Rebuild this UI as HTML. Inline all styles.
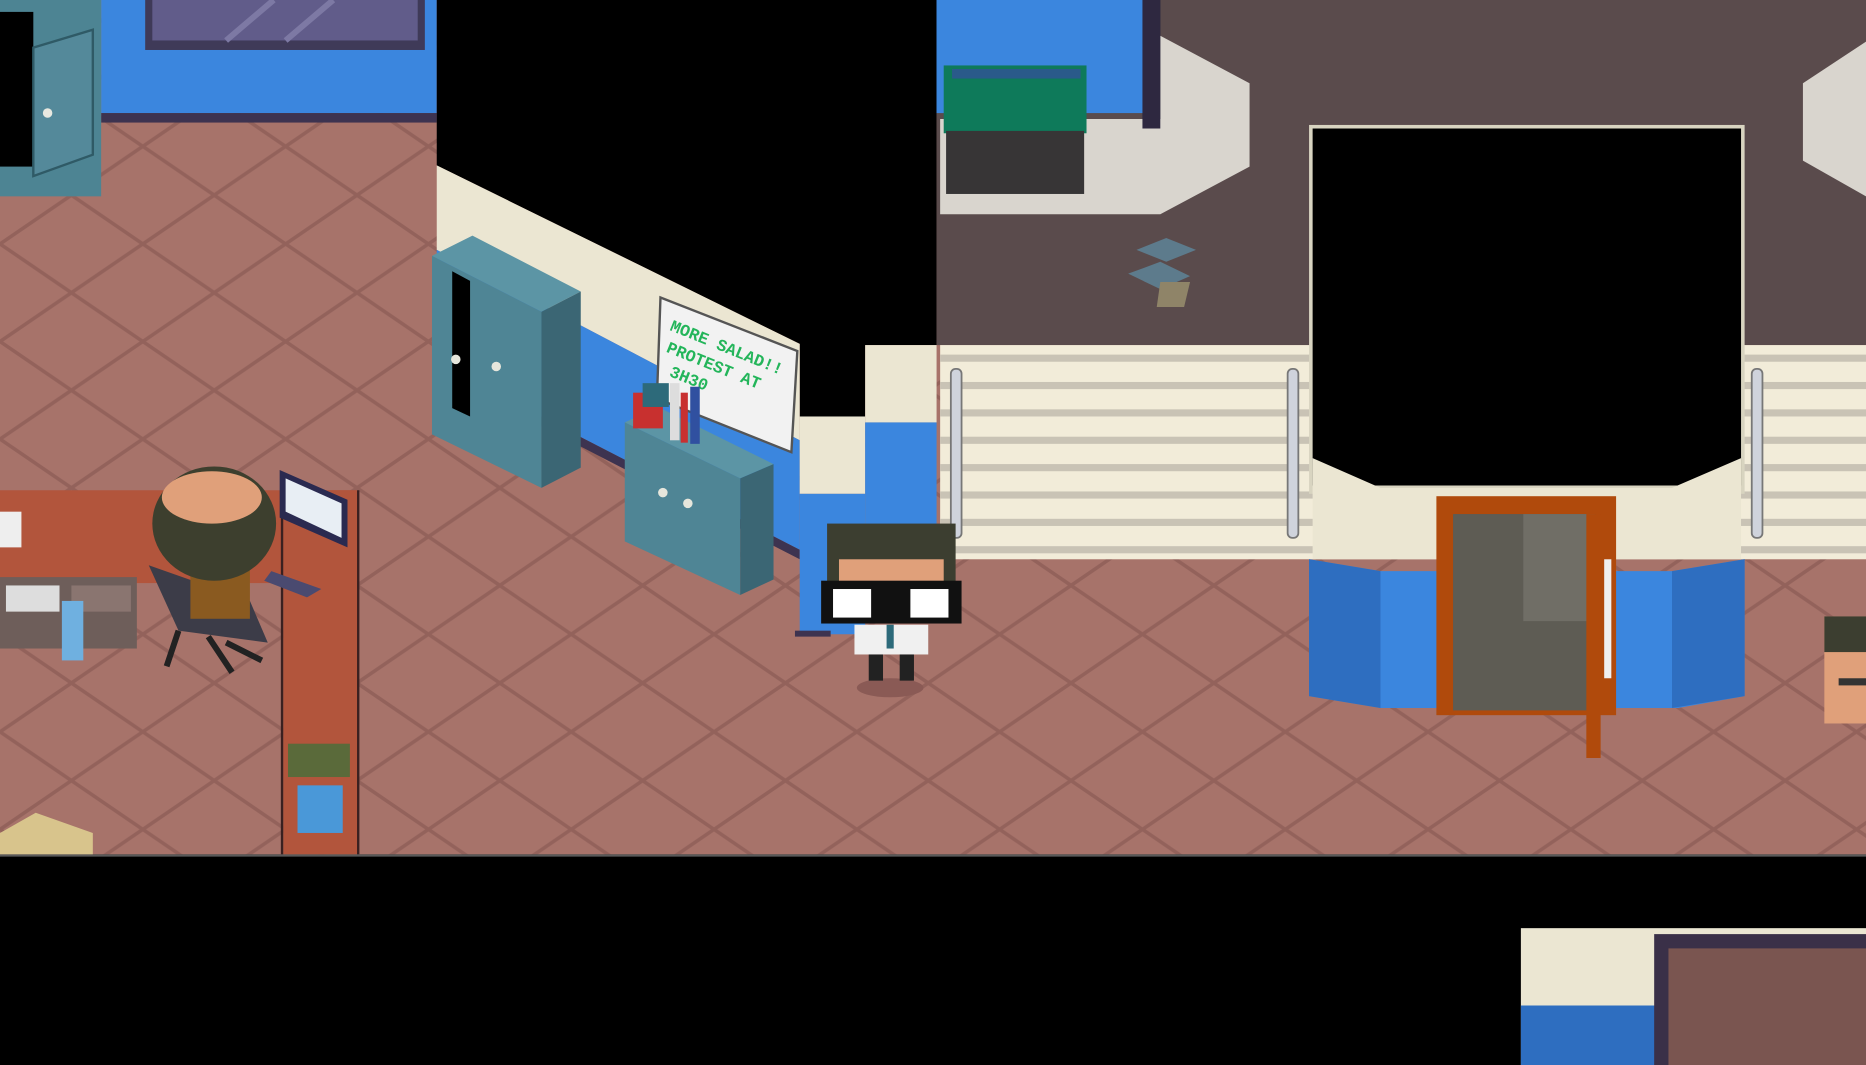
<!DOCTYPE html>
<html><head><style>html,body{margin:0;padding:0;background:#000;overflow:hidden}svg{display:block}</style></head><body>
<svg width="1866" height="1065" viewBox="0 0 1568 895" preserveAspectRatio="none" xmlns="http://www.w3.org/2000/svg">
<defs>
<pattern id="fl" width="120" height="82" patternUnits="userSpaceOnUse" x="0" y="0">
<rect width="120" height="82" fill="#a7736a"/>
<path d="M0 41 L60 0 L120 41 L60 82 Z" fill="none" stroke="#93625b" stroke-width="3"/>
</pattern>
</defs>
<rect width="1568" height="895" fill="#000"/>
<!-- floor -->
<rect x="0" y="0" width="1568" height="718" fill="url(#fl)"/>
<!-- top-left wall -->
<rect x="85" y="0" width="282" height="95" fill="#3b86de"/>
<rect x="85" y="95" width="282" height="8" fill="#3d3350"/>
<rect x="122" y="0" width="235" height="42" fill="#3f3a58"/>
<rect x="128" y="0" width="223" height="34" fill="#615c8a"/>
<path d="M190 34 L230 0 M240 34 L280 0" stroke="#7d79a4" stroke-width="5"/>
<!-- top-left cabinet -->
<rect x="0" y="0" width="85" height="165" fill="#4d8493"/>
<rect x="0" y="10" width="28" height="130" fill="#000"/>
<path d="M28 40 L78 25 L78 130 L28 148 Z" fill="#54899a" stroke="#2f5a66" stroke-width="2"/>
<circle cx="40" cy="95" r="4" fill="#e8e8e0"/>
<!-- black area top middle -->
<polygon points="367,0 787,0 787,290 727,290 727,350 672,350 672,289 367,139" fill="#000"/>
<!-- wall beige + blue -->
<polygon points="367,139 672,289 672,370 367,210" fill="#ebe6d2"/>
<polygon points="367,210 672,370 672,462 367,305" fill="#3b86de"/>
<polygon points="367,305 672,462 672,470 367,313" fill="#3d3350"/>
<!-- pillar -->
<rect x="672" y="350" width="55" height="65" fill="#ebe6d2"/>
<rect x="672" y="415" width="55" height="118" fill="#3b86de"/>
<rect x="727" y="290" width="60" height="65" fill="#ebe6d2"/>
<rect x="727" y="355" width="60" height="95" fill="#3b86de"/>
<rect x="668" y="530" width="30" height="5" fill="#3d3350"/>
<!-- wardrobe -->
<polygon points="363,215 397,198 488,245 455,262" fill="#5c95a5"/>
<polygon points="363,215 455,262 455,410 363,365" fill="#4f8595"/>
<polygon points="455,262 488,245 488,393 455,410" fill="#3b6674"/>
<polygon points="380,228 395,236 395,350 380,343" fill="#000"/>
<circle cx="383" cy="302" r="4" fill="#e6e6dc"/><circle cx="417" cy="308" r="4" fill="#e6e6dc"/>
<!-- poster -->
<polygon points="555,250 670,295 665,380 552,335" fill="#f2f2f2" stroke="#555" stroke-width="2"/>
<g transform="translate(566,268) rotate(22)" fill="#23b55a" font-family="Liberation Mono, monospace" font-weight="bold" font-size="14">
<text x="0" y="10">MORE SALAD!!</text><text x="4" y="28">PROTEST AT</text><text x="14" y="46">3H30</text></g>
<!-- small cabinet -->
<polygon points="525,355 553,342 650,390 622,402" fill="#5c95a5"/>
<polygon points="525,355 622,402 622,500 525,455" fill="#4f8595"/>
<polygon points="622,402 650,390 650,487 622,500" fill="#3b6674"/>
<circle cx="557" cy="414" r="4" fill="#e6e6dc"/><circle cx="578" cy="423" r="4" fill="#e6e6dc"/>
<rect x="532" y="330" width="25" height="30" fill="#c8302f"/><rect x="540" y="322" width="22" height="20" fill="#2d6a7a"/>
<rect x="563" y="322" width="8" height="48" fill="#ddd"/><rect x="572" y="330" width="6" height="42" fill="#c83030"/><rect x="580" y="325" width="8" height="48" fill="#3050a0"/>
<!-- desk -->
<rect x="0" y="412" width="300" height="78" fill="#b2553c"/>
<rect x="238" y="412" width="62" height="306" fill="#b2553c"/>
<rect x="236" y="412" width="2" height="306" fill="#3a2020"/><rect x="300" y="412" width="2" height="306" fill="#3a2020"/>
<rect x="0" y="485" width="115" height="60" fill="#6e5e5a"/>
<rect x="5" y="492" width="45" height="22" fill="#ddd"/><rect x="60" y="492" width="50" height="22" fill="#8a7570"/>
<rect x="52" y="505" width="18" height="50" fill="#6fb0e0"/>
<!-- monitor -->
<polygon points="235,395 292,420 292,460 235,435" fill="#2a2a50"/>
<polygon points="240,402 287,423 287,452 240,430" fill="#e8eef4"/>
<polygon points="228,480 270,495 258,502 222,488" fill="#4a4a70"/>
<!-- chair + man -->
<polygon points="125,475 210,505 225,540 150,530" fill="#3c3c48"/>
<path d="M150 530 L140 560 M175 535 L195 565 M190 540 L220 555" stroke="#222" stroke-width="5"/>
<rect x="160" y="470" width="50" height="50" fill="#8a5a20"/>
<ellipse cx="180" cy="440" rx="52" ry="48" fill="#3d3f2e"/>
<ellipse cx="178" cy="418" rx="42" ry="22" fill="#e0a07a"/>
<rect x="0" y="430" width="18" height="30" fill="#eee"/>
<!-- box on desk -->
<rect x="242" y="625" width="52" height="28" fill="#5a6a3a"/>
<rect x="250" y="660" width="38" height="40" fill="#4a98d8"/>
<polygon points="0,700 30,683 78,700 78,718 0,718" fill="#d8c48c"/>
<!-- right dark floor -->
<rect x="787" y="0" width="781" height="290" fill="#5a4b4c"/>
<rect x="787" y="0" width="175" height="95" fill="#3b86de"/>
<rect x="960" y="0" width="15" height="108" fill="#2e2840"/>
<polygon points="790,100 975,100 975,30 1050,70 1050,140 975,180 790,180" fill="#d9d5ce"/>
<rect x="787" y="0" width="175" height="95" fill="#3b86de"/>
<rect x="960" y="0" width="15" height="108" fill="#2e2840"/>
<rect x="793" y="55" width="120" height="57" fill="#0e7a5a"/>
<rect x="800" y="58" width="108" height="8" fill="#2a5a8a"/>
<rect x="795" y="110" width="116" height="53" fill="#373536"/>
<polygon points="1515,70 1568,35 1568,165 1515,135" fill="#d9d5ce"/>
<polygon points="955,210 980,200 1005,210 980,220" fill="#5d7b8c"/>
<polygon points="948,230 975,220 1000,232 975,243" fill="#5d7b8c"/>
<polygon points="975,237 1000,237 995,258 972,258" fill="#8f8468"/>
<!-- stairs -->
<rect x="790" y="290" width="778" height="180" fill="#f2ecd9"/>
<g fill="#c9c3b5">
<rect x="790" y="298" width="778" height="6"/><rect x="790" y="321" width="778" height="6"/><rect x="790" y="344" width="778" height="6"/><rect x="790" y="367" width="778" height="6"/><rect x="790" y="390" width="778" height="6"/><rect x="790" y="413" width="778" height="6"/><rect x="790" y="436" width="778" height="6"/><rect x="790" y="459" width="778" height="6"/>
</g>
<g fill="#cfd3dc" stroke="#777" stroke-width="1.5">
<rect x="799" y="310" width="9" height="142" rx="4"/><rect x="1082" y="310" width="9" height="142" rx="4"/><rect x="1472" y="310" width="9" height="142" rx="4"/>
</g>
<!-- elevator block -->
<rect x="1100" y="105" width="366" height="310" fill="#d8d4c0"/>
<rect x="1103" y="108" width="360" height="300" fill="#000"/>
<polygon points="1103,385 1160,410 1405,410 1463,385 1463,470 1103,470" fill="#ebe6d2"/>
<polygon points="1100,470 1160,480 1405,480 1466,470 1466,585 1410,595 1160,595 1100,585" fill="#3b86de"/>
<polygon points="1100,470 1160,480 1160,595 1100,585" fill="#2e6ec0"/>
<polygon points="1405,480 1466,470 1466,585 1405,595" fill="#2e6ec0"/>
<rect x="1207" y="417" width="151" height="184" fill="#b04a0c"/>
<rect x="1221" y="432" width="120" height="165" fill="#5e5c54"/>
<rect x="1280" y="432" width="60" height="90" fill="#706e66"/>
<rect x="1333" y="432" width="12" height="205" fill="#b04a0c"/>
<rect x="1348" y="470" width="6" height="100" fill="#f0f0f0"/>
<!-- center character -->
<ellipse cx="748" cy="578" rx="28" ry="8" fill="#8a5a55"/>
<rect x="695" y="440" width="108" height="55" fill="#3c3e30"/>
<rect x="705" y="470" width="88" height="50" fill="#e0a07a"/>
<rect x="690" y="488" width="118" height="36" fill="#111"/>
<rect x="700" y="495" width="32" height="24" fill="#fff"/><rect x="765" y="495" width="32" height="24" fill="#fff"/>
<rect x="718" y="525" width="62" height="25" fill="#f0f0f0"/>
<rect x="745" y="525" width="6" height="20" fill="#2d6a7a"/>
<rect x="730" y="550" width="12" height="22" fill="#222"/><rect x="756" y="550" width="12" height="22" fill="#222"/>
<!-- right edge person -->
<rect x="1533" y="518" width="35" height="90" fill="#e0a07a"/>
<rect x="1533" y="518" width="35" height="30" fill="#3c3e30"/>
<rect x="1545" y="570" width="23" height="6" fill="#333"/>
<!-- bottom -->
<rect x="0" y="718" width="1568" height="2" fill="#5a5a5a"/>
<rect x="0" y="720" width="1568" height="175" fill="#000"/>
<rect x="1278" y="780" width="290" height="115" fill="#ebe6d2"/>
<rect x="1278" y="845" width="290" height="50" fill="#2e6ec0"/>
<rect x="1390" y="785" width="178" height="110" fill="#3a3048"/>
<rect x="1402" y="797" width="166" height="98" fill="#7a5550"/>
</svg>
</body></html>
